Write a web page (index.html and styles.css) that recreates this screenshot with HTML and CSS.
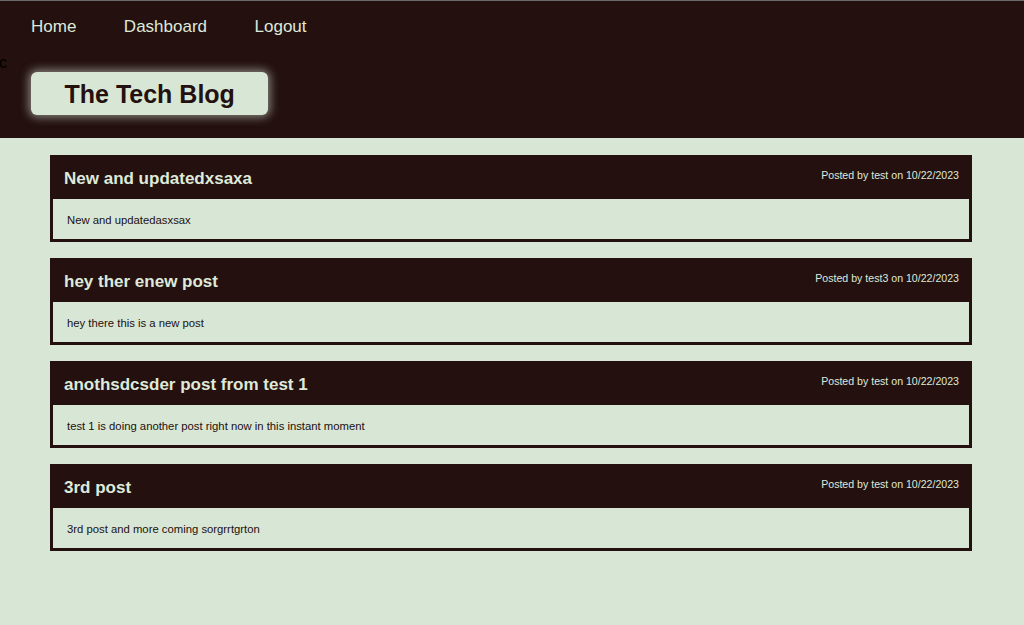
FILE: index.html
```html
<!DOCTYPE html>
<html>
<head>
<meta charset="utf-8">
<title>The Tech Blog</title>
<link rel="stylesheet" href="styles.css">
</head>
<body>
<header class="site-header">
  <nav class="nav">
    <a class="nav-link" href="#">Home</a>
    <a class="nav-link" href="#">Dashboard</a>
    <a class="nav-link" href="#">Logout</a>
  </nav>
  <div class="stray">c</div>
  <h1 class="brand">The Tech Blog</h1>
</header>
<main class="posts">
  <article class="post">
    <div class="post-head">
      <h2 class="post-title">New and updatedxsaxa</h2>
      <span class="post-meta">Posted by test on 10/22/2023</span>
    </div>
    <div class="post-body">New and updatedasxsax</div>
  </article>
  <article class="post">
    <div class="post-head">
      <h2 class="post-title">hey ther enew post</h2>
      <span class="post-meta">Posted by test3 on 10/22/2023</span>
    </div>
    <div class="post-body">hey there this is a new post</div>
  </article>
  <article class="post">
    <div class="post-head">
      <h2 class="post-title">anothsdcsder post from test 1</h2>
      <span class="post-meta">Posted by test on 10/22/2023</span>
    </div>
    <div class="post-body">test 1 is doing another post right now in this instant moment</div>
  </article>
  <article class="post">
    <div class="post-head">
      <h2 class="post-title">3rd post</h2>
      <span class="post-meta">Posted by test on 10/22/2023</span>
    </div>
    <div class="post-body">3rd post and more coming sorgrrtgrton</div>
  </article>
</main>
</body>
</html>
```
FILE: styles.css
```css
html, body {
  margin: 0;
  padding: 0;
}
body {
  background: #d8e7d5;
  font-family: "Liberation Sans", Arial, Helvetica, sans-serif;
  color: #23100f;
  min-height: 625px;
}
.site-header {
  background: #23100f;
  border-top: 1px solid #6a6a6a;
  padding: 16px 0 23px;
  overflow: hidden;
}
.nav {
  display: flex;
  gap: 47.5px;
  padding-left: 31px;
  line-height: 20px;
  height: 20px;
}
.nav-link {
  color: #dfe9da;
  text-decoration: none;
  font-size: 17px;
}
.stray {
  margin-top: 17px;
  margin-left: -1px;
  font-size: 16px;
  line-height: 18px;
  height: 18px;
  color: #000;
}
.brand {
  margin: 0 0 0 31px;
  width: fit-content;
  padding: 0 33.5px;
  height: 43px;
  line-height: 44px;
  background: #d8e7d5;
  color: #23100f;
  border-radius: 6px;
  font-size: 25px;
  font-weight: bold;
  box-shadow: 0 0 10px 2px rgba(230, 240, 226, 0.55);
}
.posts {
  display: flex;
  flex-direction: column;
  gap: 16px;
  padding: 17px 52px 0 50px;
}
.post {
  border: 3px solid #23100f;
  background: #d8e7d5;
}
.post-head {
  background: #23100f;
  display: flex;
  justify-content: space-between;
  align-items: flex-start;
  padding: 11px 10px 10px 11px;
}
.post-title {
  margin: 0;
  font-size: 17px;
  line-height: 20px;
  font-weight: bold;
  color: #dfe9da;
}
.post-meta {
  font-size: 10.6px;
  line-height: 13px;
  color: #dfe9da;
  padding-top: 0;
}
.post-body {
  padding: 14px 14px 12px;
  font-size: 11.3px;
  line-height: 14px;
  color: #23100f;
}
```
